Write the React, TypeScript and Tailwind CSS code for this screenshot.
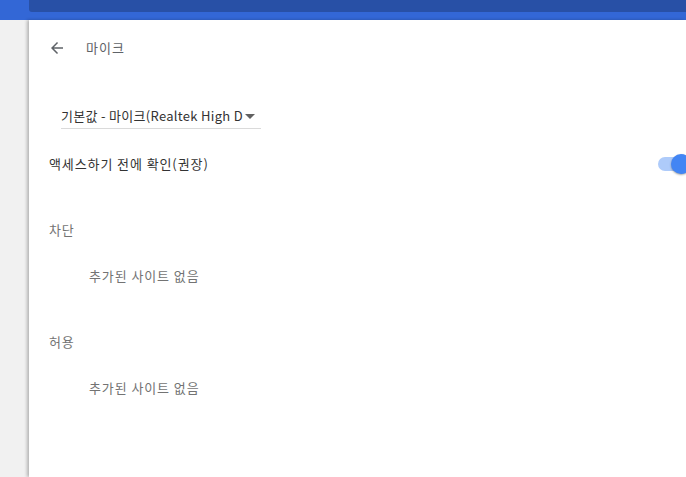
import React from "react";

const font = {
  fontFamily: '"Noto Sans CJK KR", Roboto, "Liberation Sans", sans-serif',
};

function BackArrow() {
  return (
    <svg width="18" height="18" viewBox="0 0 24 24" className="fill-[#5f6368]">
      <path d="M20 11H7.83l5.59-5.59L12 4l-8 8 8 8 1.41-1.41L7.83 13H20v-2z" />
    </svg>
  );
}

function EmptyItem() {
  return (
    <p className="ml-[60px] mt-[26px] h-5 leading-5 text-[13px] tracking-[0.9px] text-[#737373]">
      추가된 사이트 없음
    </p>
  );
}

export default function App() {
  return (
    <div
      className="w-[686px] h-[477px] overflow-hidden flex flex-col bg-[#3367d6]"
      style={font}
    >
      {/* top bar */}
      <div className="h-5 flex shrink-0">
        <div className="w-[29px]" />
        <div className="flex-1 h-3 bg-[#2850a6] rounded-bl-[3px]" />
      </div>

      <div className="flex flex-1">
        <div className="w-[29px] bg-[#f1f1f1]" />
        <div className="flex-1 bg-white shadow-[-2px_0_3px_rgba(0,0,0,0.25)]">
          {/* title */}
          <div className="h-14 flex items-center pl-[19px]">
            <BackArrow />
            <span className="ml-5 text-[13px] tracking-[1px] text-[#5f6368]">마이크</span>
          </div>

          {/* device select */}
          <div className="pt-7 pl-8">
            <div className="w-[200px] h-[25px] flex items-center border-b border-[#dadada] pr-[6px]">
              <span className="whitespace-nowrap text-[13px] tracking-[0.3px] text-[#333]">
                기본값 - 마이크(Realtek High D
              </span>
              <svg width="10" height="5" viewBox="0 0 10 5" className="ml-auto fill-[#616161]">
                <path d="M0 0h10L5 5z" />
              </svg>
            </div>
          </div>

          {/* ask toggle */}
          <div className="mt-[17px] h-9 flex items-center justify-between pl-5">
            <span className="text-[13px] tracking-[0.9px] text-[#333]">액세스하기 전에 확인(권장)</span>
            <div className="relative w-[34px] h-5 mr-[-6px] flex items-center">
              <div className="w-full h-[14px] rounded-full bg-[#aecbfa]" />
              <div className="absolute right-[1px] top-0 w-5 h-5 rounded-full bg-[#4285f4] shadow-[0_1px_2px_rgba(0,0,0,0.35)]" />
            </div>
          </div>

          {/* block */}
          <p className="mt-[38px] pl-5 h-5 leading-5 text-[13px] tracking-[0.9px] text-[#737373]">차단</p>
          <EmptyItem />

          {/* allow */}
          <p className="mt-[46px] pl-5 h-5 leading-5 text-[13px] tracking-[0.9px] text-[#737373]">허용</p>
          <EmptyItem />
        </div>
      </div>
    </div>
  );
}
